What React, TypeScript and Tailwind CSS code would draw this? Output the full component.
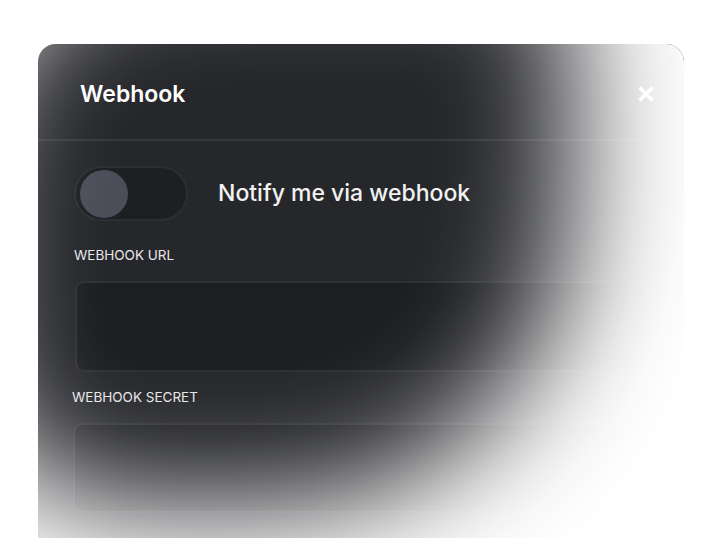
export default function App() {
  return (
    <div className="h-[538px] w-[720px] overflow-hidden bg-white pl-[38px] pt-[44px] font-['Inter',sans-serif]">
      <div className="relative h-[580px] w-[646px] overflow-hidden rounded-[18px] bg-[#26272b]">
        {/* header */}
        <div className="flex h-[97px] items-center justify-between border-b-2 border-[#36373b] pl-[42px] pr-[30px] pt-[5px]">
          <h2 className="text-[23px] font-semibold text-white">Webhook</h2>
          <button className="text-white">
            <svg width="16" height="16" viewBox="0 0 16 16">
              <path d="M1.5 1.5 L14.5 14.5 M14.5 1.5 L1.5 14.5" stroke="currentColor" strokeWidth="3.4" />
            </svg>
          </button>
        </div>

        {/* body */}
        <div className="px-[36px] pt-[25px]">
          <div className="flex items-center gap-[30px]">
            <div className="flex h-[55px] w-[114px] items-center rounded-full border-2 border-[#2d2e32] bg-[#1e1f22] pl-[4px]">
              <div className="h-[48px] w-[48px] rounded-full bg-[#4b4d58]" />
            </div>
            <span className="text-[23px] font-medium text-[#f2f2f2]">Notify me via webhook</span>
          </div>

          <label className="mt-[24px] block text-[13.5px] leading-[20px] text-[#e8e8e8]">WEBHOOK URL</label>
          <div className="mt-[16px] ml-[1px] h-[91px] w-[573px] rounded-[9px] border-2 border-[#2e2f33] bg-[#1d1e21]" />

          <label className="mt-[15px] -ml-[2px] block text-[13.5px] leading-[20px] text-[#e8e8e8]">WEBHOOK SECRET</label>
          <div className="mt-[16px] -ml-[1px] h-[90px] w-[575px] rounded-[9px] border-2 border-[#2e2f33] bg-[#1d1e21]" />
        </div>

        {/* white haze */}
        <div className="pointer-events-none absolute inset-0">
          <div className="absolute left-[-470px] top-[-499px] h-[1360px] w-[1404px] rounded-[622px_480px_700px_559px] border-[400px] border-white blur-[62px]" />
        </div>
      </div>
    </div>
  )
}
